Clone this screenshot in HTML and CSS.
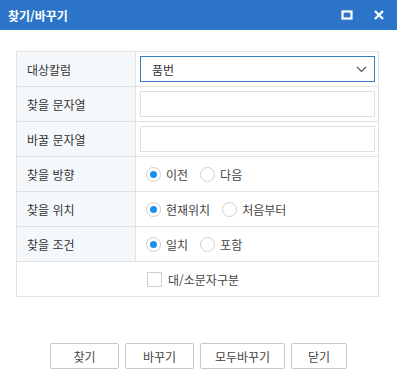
FILE: index.html
```html
<!DOCTYPE html>
<html lang="ko">
<head>
<meta charset="utf-8">
<link rel="stylesheet" href="styles.css">
</head>
<body>
<div class="dialog">
  <div class="titlebar">
    <span class="title">찾기/바꾸기</span>
    <div class="tools">
      <svg class="ico" width="12" height="10" viewBox="0 0 12 10"><rect x="1.5" y="1.5" width="9" height="7" fill="none" stroke="#fff" stroke-width="2.2"/></svg>
      <svg class="ico" width="10" height="10" viewBox="0 0 10 10"><path d="M1 1L9 9M9 1L1 9" stroke="#fff" stroke-width="2.2"/></svg>
    </div>
  </div>
  <div class="body">
    <div class="form">
      <div class="lbl">대상칼럼</div>
      <div class="val"><div class="select"><span>품번</span><svg width="11" height="7" viewBox="0 0 11 7"><path d="M1 1L5.5 5.5L10 1" fill="none" stroke="#555" stroke-width="1.2"/></svg></div></div>
      <div class="lbl">찾을 문자열</div>
      <div class="val"><input class="inp" type="text"></div>
      <div class="lbl">바꿀 문자열</div>
      <div class="val"><input class="inp" type="text"></div>
      <div class="lbl">찾을 방향</div>
      <div class="val radios"><span class="opt"><i class="radio on"></i>이전</span><span class="opt"><i class="radio"></i>다음</span></div>
      <div class="lbl">찾을 위치</div>
      <div class="val radios"><span class="opt"><i class="radio on"></i>현재위치</span><span class="opt"><i class="radio"></i>처음부터</span></div>
      <div class="lbl">찾을 조건</div>
      <div class="val radios"><span class="opt"><i class="radio on"></i>일치</span><span class="opt"><i class="radio"></i>포함</span></div>
      <div class="full"><span class="opt"><i class="check"></i>대/소문자구분</span></div>
    </div>
    <div class="buttons">
      <button class="btn w69">찾기</button>
      <button class="btn w69">바꾸기</button>
      <button class="btn w85">모두바꾸기</button>
      <button class="btn w56">닫기</button>
    </div>
  </div>
</div>
</body>
</html>
```
FILE: styles.css
```css
* { box-sizing: border-box; }
html, body { margin: 0; padding: 0; background: #fff; }
body {
  font-family: "Noto Sans CJK KR", "Noto Sans", sans-serif;
  font-size: 12px;
  color: #333;
  width: 397px;
  height: 389px;
}
.titlebar {
  height: 30px;
  background: #2b74c7;
  display: flex;
  align-items: center;
  justify-content: space-between;
  padding: 0 13px 0 8px;
}
.title { color: #fff; font-weight: bold; font-size: 12px; }
.tools { display: flex; align-items: center; gap: 21px; }
.ico { display: block; }
.body { padding: 21px 18px 0 16px; }
.form {
  display: grid;
  grid-template-columns: 119px 1fr;
  border-top: 1px solid #e1e1e1;
  border-left: 1px solid #e1e1e1;
  width: 363px;
}
.lbl, .val, .full {
  height: 35px;
  border-right: 1px solid #e1e1e1;
  border-bottom: 1px solid #e1e1e1;
  display: flex;
  align-items: center;
}
.lbl { background: #f5f8fb; padding-left: 10px; color: #333; }
.val { padding: 0 3px 0 4px; }
.full { grid-column: 1 / 3; padding-left: 130px; }
.select {
  width: 235px;
  height: 26px;
  border: 1px solid #3a7ec2;
  display: flex;
  align-items: center;
  justify-content: space-between;
  padding: 0 7px 0 11px;
}
.inp {
  width: 235px;
  height: 26px;
  border: 1px solid #dedede;
  margin: 0;
  padding: 0 6px;
  outline: none;
  font: inherit;
}
.radios { padding-left: 10px; gap: 12px; }
.opt { display: inline-flex; align-items: center; gap: 5px; color: #444; }
.radio {
  width: 15px; height: 15px;
  border: 1px solid #cfcfcf;
  border-radius: 50%;
  display: inline-flex;
  align-items: center;
  justify-content: center;
  background: #fff;
}
.radio.on::after {
  content: "";
  width: 7px; height: 7px;
  border-radius: 50%;
  background: #1c8ef0;
}
.check {
  width: 15px; height: 15px;
  border: 1px solid #cfcfcf;
  background: #fff;
  margin-right: 1px;
}
.buttons {
  display: flex;
  justify-content: center;
  gap: 6px;
  margin-top: 46px;
  padding-left: 2px;
}
.btn {
  height: 26px;
  border: 1px solid #c8c8c8;
  border-radius: 2px;
  background: #fff;
  font: inherit;
  color: #444;
  padding: 0;
}
.w69 { width: 69px; }
.w85 { width: 85px; }
.w56 { width: 56px; }
```
